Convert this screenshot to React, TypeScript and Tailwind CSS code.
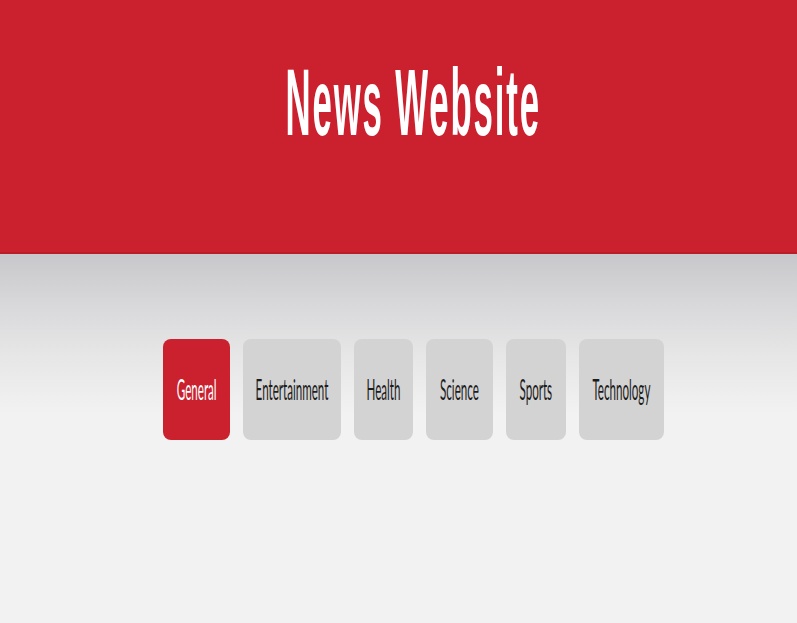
import {useState} from 'react'

const categories = [
  {name:'General',w:'w-[67px]'},
  {name:'Entertainment',w:'w-[98px]'},
  {name:'Health',w:'w-[59px]'},
  {name:'Science',w:'w-[67px]'},
  {name:'Sports',w:'w-[60px]'},
  {name:'Technology',w:'w-[85px]'},
]

function App() {

  const [active,setActive] = useState('General')

  return (
    <div className='min-h-[623px] bg-[#f2f2f2] font-["Lato",sans-serif]'>
      <header className='h-[254px] bg-[#cb202d] border-b-2 border-[#b81d29] flex justify-center pl-[30px] pt-[48px]'>
        <h1 className='text-[94px] leading-[110px] font-bold text-white font-["Liberation_Sans",sans-serif] tracking-[5px] scale-x-[0.37] whitespace-nowrap h-fit'>
          News Website
        </h1>
      </header>

      <main className='bg-[linear-gradient(to_bottom,#c8c8cc_0px,#d8d8da_50px,#e6e6e7_100px,#f2f2f2_160px)] pt-[85px] pb-[184px] flex justify-center pl-[30px]'>
        <div className='flex gap-[13px]'>
          {categories.map(c=>(
            <button
              key={c.name}
              onClick={()=>setActive(c.name)}
              className={(active===c.name ? 'bg-[#cb202d] text-white' : 'bg-[#d3d3d3] text-[#1c1c1c]')+' '+c.w+' h-[101px] rounded-[8px] flex items-center justify-center cursor-pointer pb-[3px]'}
            >
              <span className='text-[29px] leading-none whitespace-nowrap scale-x-[0.4]'>{c.name}</span>
            </button>
          ))}
        </div>
      </main>
    </div>
  )

}

export default App
